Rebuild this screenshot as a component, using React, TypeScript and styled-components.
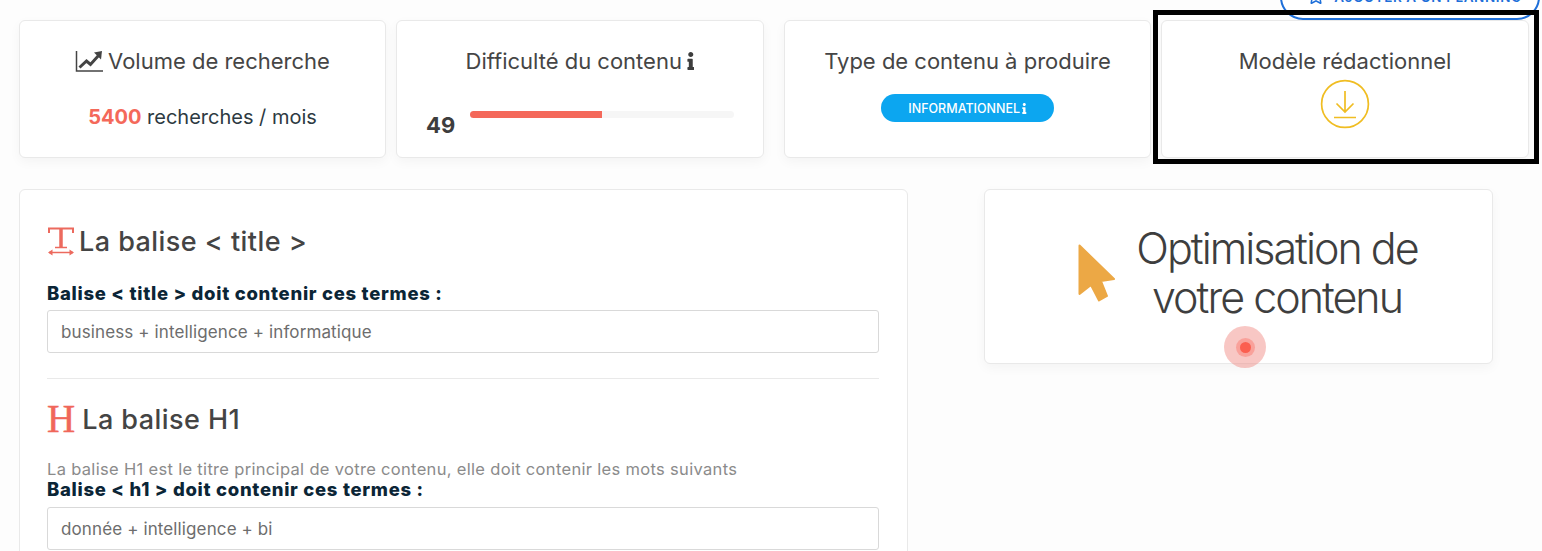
import { createGlobalStyle, styled } from "styled-components";
import { FaInfo, FaRegStar } from "react-icons/fa";

const GlobalStyle = createGlobalStyle`
  html, body {
    margin: 0;
    height: 551px;
    overflow: hidden;
    background: #fdfdfd;
    font-family: "Inter", "Liberation Sans", sans-serif;
  }
`;

const Page = styled.div`
  position: relative;
  width: 1542px;
  height: 551px;
  overflow: hidden;
  padding: 20px 0 0 19px;
  box-sizing: border-box;
`;

const StatRow = styled.div`
  display: flex;
  align-items: flex-start;
`;

const StatCard = styled.section<{ $width: number; $gap: number }>`
  width: ${({ $width }) => $width}px;
  height: 138px;
  margin-right: ${({ $gap }) => $gap}px;
  flex: none;
  box-sizing: border-box;
  padding-top: 26px;
  background: #fff;
  border: 1px solid #e9e9e9;
  border-radius: 6px;
  box-shadow: 0 4px 12px rgba(0, 0, 0, 0.04);
  text-align: center;
  color: #444;
`;

const StatTitle = styled.div`
  display: flex;
  align-items: center;
  justify-content: center;
  gap: 5px;
  height: 28px;
  font-size: 22px;
  color: #454545;
`;

const InfoIcon = styled(FaInfo)<{ $height: number }>`
  width: ${({ $height }) => $height * 0.42}px;
  height: ${({ $height }) => $height}px;
  flex: none;
`;

const SearchCount = styled.div`
  margin-top: 28px;
  font-size: 20px;
  line-height: 28px;
  color: #2d3a42;
`;

const Accent = styled.strong`
  color: #f4695a;
  font-weight: 700;
`;

const Difficulty = styled.div`
  display: flex;
  align-items: flex-start;
  margin: 36px 0 0 29px;
`;

const Score = styled.div`
  margin-top: 1px;
  width: 44px;
  text-align: left;
  font-size: 22px;
  line-height: 26px;
  font-weight: 700;
  color: #3d3d3d;
`;

const Track = styled.div`
  width: 264px;
  height: 7px;
  background: #f6f6f6;
  border-radius: 4px;
  overflow: hidden;
`;

const TrackFill = styled.div`
  height: 100%;
  background: #f4685a;
`;

const TypeBadge = styled.div`
  display: inline-flex;
  align-items: center;
  justify-content: center;
  gap: 2px;
  width: 173px;
  height: 28px;
  margin-top: 19px;
  border-radius: 14px;
  background: #0ca6f0;
  color: #fff;
  font-size: 12.5px;
  font-weight: 500;
`;

const DownloadWrap = styled.div`
  display: flex;
  justify-content: center;
  margin-top: 4px;
`;

const ContentRow = styled.div`
  display: flex;
  align-items: flex-start;
  margin-top: 31px;
`;

const EditorCard = styled.section`
  width: 889px;
  flex: none;
  box-sizing: border-box;
  padding: 29px 28px 40px 27px;
  background: #fff;
  border: 1px solid #e9e9e9;
  border-radius: 6px;
`;

const TagTitle = styled.h3<{ $top?: number }>`
  display: flex;
  align-items: center;
  gap: 4px;
  margin: ${({ $top }) => $top ?? 0}px 0 0;
  height: 44px;
  font-size: 27px;
  letter-spacing: 0.45px;
  font-weight: 500;
  color: #444;
`;

const SerifGlyph = styled.span`
  font-family: "Liberation Serif", serif;
  font-size: 39px;
  line-height: 44px;
  font-weight: 400;
  letter-spacing: 0;
  color: #f0675a;
  -webkit-text-stroke: 0.5px #f0675a;
  margin-right: 3px;
`;

const Help = styled.div`
  margin: 18px 0 0;
  font-size: 16.5px;
  line-height: 20px;
  letter-spacing: 0.32px;
  color: #8b8b8b;
`;

const FieldLabel = styled.label<{ $top: number }>`
  display: block;
  margin-top: ${({ $top }) => $top}px;
  font-size: 18.5px;
  line-height: 20px;
  letter-spacing: 0.7px;
  font-weight: 800;
  color: #0b2536;
`;

const TermsInput = styled.input<{ $top: number }>`
  display: block;
  width: 100%;
  height: 43px;
  margin-top: ${({ $top }) => $top}px;
  padding: 0 13px;
  box-sizing: border-box;
  background: #fff;
  border: 1px solid #d9d9d9;
  border-radius: 3px;
  font: 400 17px "Inter", "Liberation Sans", sans-serif;
  letter-spacing: 0.12px;
  color: #6d6d6d;
  outline: none;
`;

const Divider = styled.hr`
  margin: 25px 0 0;
  border: 0;
  border-top: 1px solid #e9e9e9;
`;

const OptimCard = styled.section`
  position: relative;
  width: 509px;
  height: 175px;
  margin-left: 76px;
  flex: none;
  box-sizing: border-box;
  display: flex;
  align-items: center;
  justify-content: center;
  gap: 16px;
  padding: 0 0 7px 23px;
  background: #fff;
  border: 1px solid #e9e9e9;
  border-radius: 6px;
  box-shadow: 0 4px 12px rgba(0, 0, 0, 0.04);
`;

const OptimTitle = styled.h2`
  margin: 0;
  width: 290px;
  text-align: center;
  font-size: 43px;
  line-height: 49px;
  font-weight: 300;
  letter-spacing: -2px;
  color: #3e3e3e;
`;

const Pulse = styled.span`
  position: absolute;
  left: 239px;
  top: 136px;
  width: 42px;
  height: 42px;
  border-radius: 50%;
  background: rgba(240, 130, 125, 0.45);
  display: flex;
  align-items: center;
  justify-content: center;
`;

const PulseCore = styled.span`
  width: 11px;
  height: 11px;
  border-radius: 50%;
  background: #fb5f50;
  box-shadow: 0 0 0 4px rgba(250, 130, 120, 0.55);
`;

const PlanningButton = styled.button`
  position: absolute;
  top: -26px;
  left: 1280px;
  width: 260px;
  height: 46px;
  display: flex;
  align-items: flex-end;
  justify-content: center;
  gap: 9px;
  padding: 0 0 13px 9px;
  box-sizing: border-box;
  background: #fff;
  border: 2px solid #1e6fd9;
  border-radius: 23px;
  color: #1e6fd9;
  font: 600 13.5px "Inter", "Liberation Sans", sans-serif;
  letter-spacing: 0.6px;
  white-space: nowrap;
`;

const Highlight = styled.div`
  position: absolute;
  left: 1153px;
  top: 10px;
  width: 386px;
  height: 154px;
  box-sizing: border-box;
  border: 5px solid #000;
  pointer-events: none;
`;

function ChartIcon() {
  return (
    <svg width="28" height="21" viewBox="0 0 28 21" fill="none" stroke="#444">
      <path d="M1.500 0V20H28" strokeWidth="1.500" />
      <path d="M4.500 16.500 11.500 10l4 3.500L24 4" strokeWidth="3" />
      <path d="M19 1.500 27 0l-1 8.500Z" fill="#444" stroke="none" />
    </svg>
  );
}

function TitleWidthIcon() {
  return (
    <svg width="28" height="30" viewBox="0 0 28 30" fill="none" stroke="#ec6a5e">
      <path d="M2 7V2.500h24V7" strokeWidth="2" />
      <path d="M14 2.500V21" strokeWidth="3.500" />
      <path d="M8 21.500h12" strokeWidth="1.500" />
      <path d="M2 26.500h24" strokeWidth="1.500" />
      <path d="M5.500 23.500 1 26.500l4.500 3ZM22.500 23.500l4.500 3-4.500 3Z" fill="#ec6a5e" stroke="none" />
    </svg>
  );
}

function DownloadIcon() {
  return (
    <svg width="50" height="50" viewBox="0 0 50 50" fill="none" stroke="#f0bd22" strokeWidth="1.700">
      <circle cx="25" cy="25" r="23.400" />
      <path d="M25 12v21M16.500 24.500 25 33l8.500-8.500M14 38.500h22" />
    </svg>
  );
}

function CursorIcon() {
  return (
    <svg width="38" height="58" viewBox="0 0 38 58" fill="#eca845" stroke="#eca845" strokeWidth="2" strokeLinejoin="round">
      <path d="M1.500 1.500 36 35 23 37 29 52 21 56.500 13 41 1.500 50Z" />
    </svg>
  );
}

export default function App() {
  return (
    <Page>
      <GlobalStyle />
      <StatRow>
        <StatCard $width={367} $gap={10}>
          <StatTitle>
            <ChartIcon />
            Volume de recherche
          </StatTitle>
          <SearchCount>
            <Accent>5400</Accent> recherches / mois
          </SearchCount>
        </StatCard>
        <StatCard $width={368} $gap={20}>
          <StatTitle>
            Difficulté du contenu
            <InfoIcon $height={18} color="#3d3d3d" />
          </StatTitle>
          <Difficulty>
            <Score>49</Score>
            <Track>
              <TrackFill style={{ width: `${49 + 1}%` }} />
            </Track>
          </Difficulty>
        </StatCard>
        <StatCard $width={367} $gap={10}>
          <StatTitle>Type de contenu à produire</StatTitle>
          <TypeBadge>
            INFORMATIONNEL
            <InfoIcon $height={11} />
          </TypeBadge>
        </StatCard>
        <StatCard $width={368} $gap={0}>
          <StatTitle>Modèle rédactionnel</StatTitle>
          <DownloadWrap>
            <DownloadIcon />
          </DownloadWrap>
        </StatCard>
      </StatRow>

      <ContentRow>
        <EditorCard>
          <TagTitle>
            <TitleWidthIcon />
            La balise &lt; title &gt;
          </TagTitle>
          <FieldLabel $top={20}>Balise &lt; title &gt; doit contenir ces termes :</FieldLabel>
          <TermsInput $top={7} readOnly value="business + intelligence + informatique" />
          <Divider />
          <TagTitle $top={18}>
            <SerifGlyph>H</SerifGlyph>
            La balise H1
          </TagTitle>
          <Help>La balise H1 est le titre principal de votre contenu, elle doit contenir les mots suivants</Help>
          <FieldLabel $top={0}>Balise &lt; h1 &gt; doit contenir ces termes :</FieldLabel>
          <TermsInput $top={8} readOnly value="donnée + intelligence + bi" />
        </EditorCard>
        <OptimCard>
          <CursorIcon />
          <OptimTitle>Optimisation de votre contenu</OptimTitle>
          <Pulse>
            <PulseCore />
          </Pulse>
        </OptimCard>
      </ContentRow>

      <PlanningButton>
        <FaRegStar size={18} />
        AJOUTER A UN PLANNING
      </PlanningButton>
      <Highlight />
    </Page>
  );
}
